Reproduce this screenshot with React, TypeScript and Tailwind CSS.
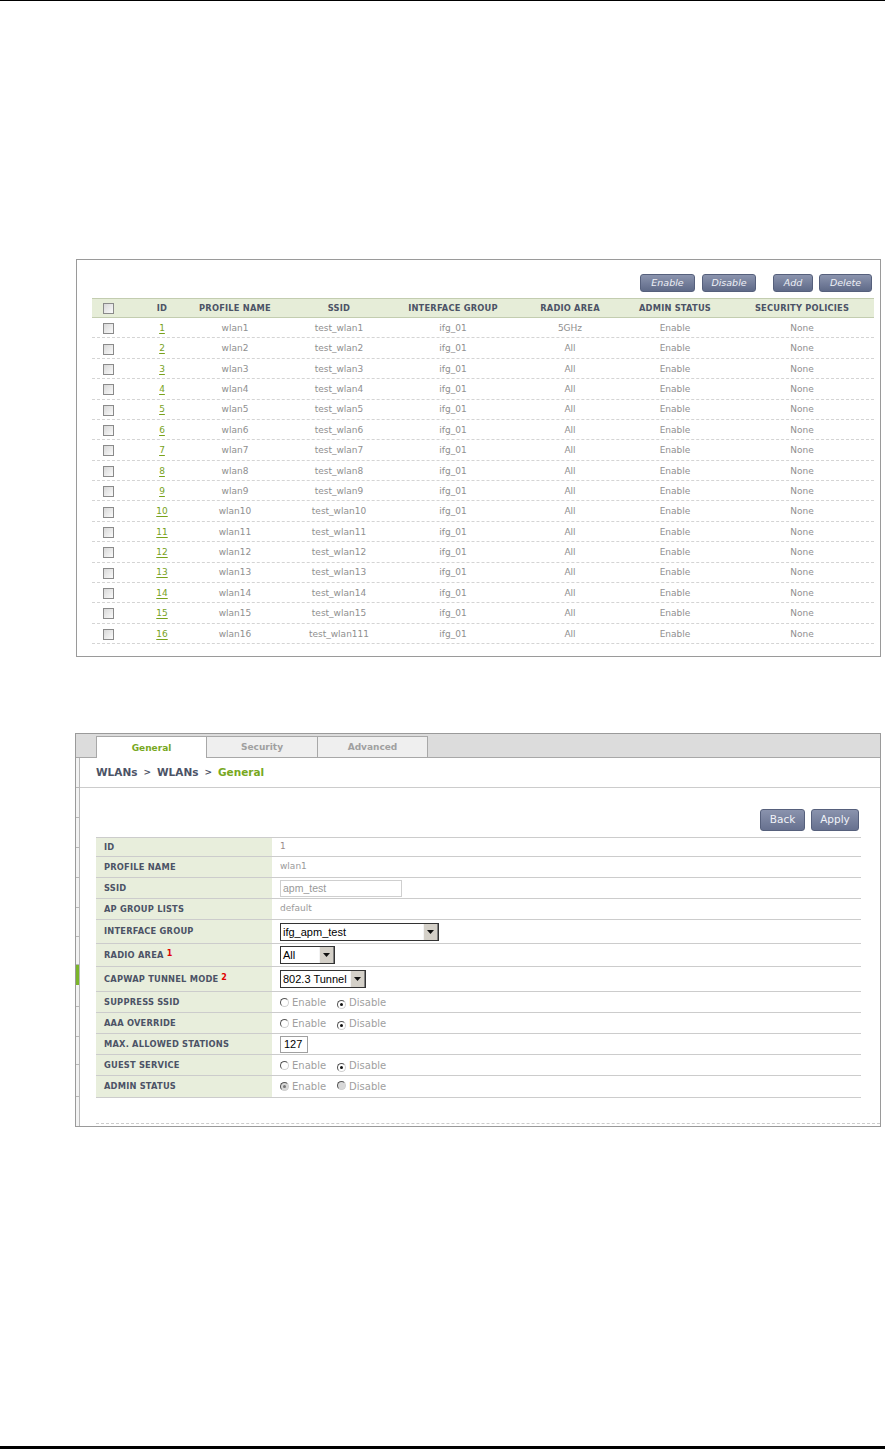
import React from "react";

const F = "font-['DejaVu_Sans',Verdana,sans-serif]";

const Checkbox = () => (
  <span className="inline-block w-[11px] h-[11px] border border-[#8a8a8a] bg-linear-to-br from-[#d8d8d8] to-[#fafafa]" />
);

const SlateBtn = ({ label, w }: { label: string; w: string }) => (
  <div
    className={`${w} h-[18px] rounded-[3px] border border-[#56607c] bg-linear-to-b from-[#8b94ae] to-[#5f6a88] flex items-center justify-center text-[9.5px] italic text-[#eef0f6] ${F}`}
  >
    {label}
  </div>
);

const cols = "grid grid-cols-[43px_63px_89px_109px_115px_111px_116px_135px]";
const pads = [
  "pr-[11px]",
  "pr-[9px]",
  "pr-[15px]",
  "pr-[5px]",
  "pr-[1px]",
  "pl-[7px]",
  "pr-[10px]",
  "pr-[7px]",
];
const headers = [
  "",
  "ID",
  "PROFILE NAME",
  "SSID",
  "INTERFACE GROUP",
  "RADIO AREA",
  "ADMIN STATUS",
  "SECURITY POLICIES",
];

const rows = Array.from({ length: 16 }, (_, i) => {
  const n = i + 1;
  return {
    id: String(n),
    profile: `wlan${n}`,
    ssid: n === 16 ? "test_wlan111" : `test_wlan${n}`,
    ifg: "ifg_01",
    radio: n === 1 ? "5GHz" : "All",
    admin: "Enable",
    sec: "None",
  };
});

const Radio = ({ checked, disabled }: { checked?: boolean; disabled?: boolean }) => (
  <span
    className={`inline-flex items-center justify-center w-[9px] h-[9px] rounded-full border border-t-[#555] border-l-[#555] border-r-[#d0d0d0] border-b-[#d0d0d0] ${
      disabled ? "bg-[#d8d8d8]" : "bg-white"
    }`}
  >
    {checked && (
      <span className={`w-[3px] h-[3px] rounded-full ${disabled ? "bg-[#777]" : "bg-[#111]"}`} />
    )}
  </span>
);

const RadioPair = ({ enable, disabled }: { enable?: boolean; disabled?: boolean }) => (
  <div className={`flex items-center text-[10px] text-[#a0a0a0] ${F}`}>
    <Radio checked={enable} disabled={disabled} />
    <span className="ml-[3px]">Enable</span>
    <span className="ml-[11px]">
      <Radio checked={!enable} disabled={disabled} />
    </span>
    <span className="ml-[3px]">Disable</span>
  </div>
);

const Arrow = () => (
  <svg width="7" height="4" viewBox="0 0 7 4">
    <path d="M0 0H7L3.5 4Z" fill="#111" />
  </svg>
);

const Select = ({ value, w }: { value: string; w: string }) => (
  <div className={`${w} h-[18px] flex border border-[#333] bg-white`}>
    <span className="flex-1 pl-[2px] text-[11px] leading-[16px] text-black font-['Liberation_Sans',Arial,sans-serif] whitespace-nowrap overflow-hidden">
      {value}
    </span>
    <span className="w-[15px] bg-[#d4d0c8] border-l border-[#f4f4f4] border-r border-r-[#808080] flex items-center justify-center">
      <Arrow />
    </span>
  </div>
);

const Sup = ({ n }: { n: string }) => (
  <sup className="text-[#e00000] text-[8px] ml-[3px] relative -top-[1px] font-bold">{n}</sup>
);

type FormRow = { label: React.ReactNode; h: string; value: React.ReactNode };

const formRows: FormRow[] = [
  { label: "ID", h: "h-[19px]", value: <span className="text-[#9a8a8a]">1</span> },
  { label: "PROFILE NAME", h: "h-[21px]", value: "wlan1" },
  {
    label: "SSID",
    h: "h-[21px]",
    value: (
      <div className="w-[122px] h-[17px] border border-[#cfcfcf] pl-[2px] text-[10.5px] leading-[15px] text-[#999] font-['Liberation_Sans',Arial,sans-serif]">
        apm_test
      </div>
    ),
  },
  { label: "AP GROUP LISTS", h: "h-[21px]", value: "default" },
  {
    label: "INTERFACE GROUP",
    h: "h-[24px]",
    value: <Select value="ifg_apm_test" w="w-[159px]" />,
  },
  {
    label: (
      <>
        RADIO AREA
        <Sup n="1" />
      </>
    ),
    h: "h-[23px]",
    value: <Select value="All" w="w-[55px]" />,
  },
  {
    label: (
      <>
        CAPWAP TUNNEL MODE
        <Sup n="2" />
      </>
    ),
    h: "h-[25px]",
    value: <Select value="802.3 Tunnel" w="w-[86px]" />,
  },
  { label: "SUPPRESS SSID", h: "h-[21px]", value: <RadioPair /> },
  { label: "AAA OVERRIDE", h: "h-[21px]", value: <RadioPair /> },
  {
    label: "MAX. ALLOWED STATIONS",
    h: "h-[21px]",
    value: (
      <div className="w-[28px] h-[17px] border border-[#a0a0a0] pl-[3px] text-[11px] leading-[15px] text-black font-['Liberation_Sans',Arial,sans-serif]">
        127
      </div>
    ),
  },
  { label: "GUEST SERVICE", h: "h-[21px]", value: <RadioPair /> },
  { label: "ADMIN STATUS", h: "h-[22px]", value: <RadioPair enable disabled /> },
];

const stripCells = [
  { h: "h-[30px]", g: false },
  { h: "h-[30px]", g: false },
  { h: "h-[30px]", g: false },
  { h: "h-[30px]", g: false },
  { h: "h-[30px]", g: false },
  { h: "h-[29px]", g: false },
  { h: "h-[28px]", g: false },
  { h: "h-[20px]", g: true },
  { h: "h-[22px]", g: false },
  { h: "h-[30px]", g: false },
  { h: "h-[28px]", g: false },
  { h: "h-[32px]", g: false },
];

export default function App() {
  return (
    <div className={`w-full h-[1449px] bg-white flex flex-col ${F}`}>
      <div className="h-[1px] bg-black shrink-0" />

      {/* Panel 1: WLAN list */}
      <div className="mt-[258px] ml-[76px] w-[805px] h-[398px] border border-[#9a9a9a] pl-[15px] pr-[6px] pt-[14px] shrink-0">
        <div className="flex justify-end mr-[2px]">
          <SlateBtn label="Enable" w="w-[55px]" />
          <div className="ml-[7px]">
            <SlateBtn label="Disable" w="w-[54px]" />
          </div>
          <div className="ml-[17px]">
            <SlateBtn label="Add" w="w-[40px]" />
          </div>
          <div className="ml-[6px]">
            <SlateBtn label="Delete" w="w-[53px]" />
          </div>
        </div>

        <div className="mt-[6px]">
          <div
            className={`${cols} h-[20px] bg-[#e6edd8] border-t border-b border-[#c3cdb0] items-center text-[8.3px] font-bold text-[#4c5366] tracking-[0.2px]`}
          >
            {headers.map((h, i) => (
              <div key={i} className={`text-center flex justify-center whitespace-nowrap ${pads[i]}`}>
                {i === 0 ? <Checkbox /> : h}
              </div>
            ))}
          </div>
          {rows.map((r) => {
            const cells = [r.id, r.profile, r.ssid, r.ifg, r.radio, r.admin, r.sec];
            return (
              <div
                key={r.id}
                className={`${cols} h-[20.375px] pt-[2px] border-b border-dashed border-[#d4d4d4] items-center text-[9px] text-[#8f8f8f]`}
              >
                <div className={`flex justify-center ${pads[0]}`}>
                  <Checkbox />
                </div>
                {cells.map((c, i) => (
                  <div key={i} className={`text-center whitespace-nowrap ${pads[i + 1]}`}>
                    {i === 0 ? (
                      <span className="text-[#78a21c] underline decoration-[#78a21c] underline-offset-[2px]">
                        {c}
                      </span>
                    ) : (
                      c
                    )}
                  </div>
                ))}
              </div>
            );
          })}
        </div>
      </div>

      {/* Panel 2: WLAN General form */}
      <div className="mt-[76px] ml-[75px] w-[806px] h-[394px] border border-[#9a9a9a] flex flex-col shrink-0">
        <div className="h-[24px] bg-[#dcdcdc] border-b border-[#a8a8a8] flex items-end pl-[20px] shrink-0">
          <div className="w-[111px] h-[22px] -mb-[1px] pt-[2px] bg-white border border-b-0 border-[#a8a8a8] flex items-center justify-center text-[9px] font-bold text-[#78a81e]">
            General
          </div>
          <div className="w-[111px] h-[22px] -mb-[1px] pt-[2px] bg-[#efefef] border-t border-r border-b border-[#a8a8a8] flex items-center justify-center text-[9px] font-bold text-[#a0a0a0]">
            Security
          </div>
          <div className="w-[110px] h-[22px] -mb-[1px] pt-[2px] bg-[#efefef] border-t border-r border-b border-[#a8a8a8] flex items-center justify-center text-[9px] font-bold text-[#a0a0a0]">
            Advanced
          </div>
        </div>

        <div className="flex flex-1">
          <div className="w-[3px] flex flex-col bg-[#f3f3f3]">
            {stripCells.map((c, i) => (
              <div
                key={i}
                className={`${c.h} shrink-0 border-b ${c.g ? "bg-[#7bb52a] border-[#7bb52a]" : "border-[#b8b8b8]"}`}
              />
            ))}
          </div>
          <div className="flex-1 border-l border-[#b8b8b8] flex flex-col">
            <div className="h-[30px] border-b border-[#cccccc] pl-[16px] flex items-center text-[10.5px] font-bold text-[#4c5366] shrink-0">
              WLANs
              <span className="mx-[6px] text-[9px]">&gt;</span>
              WLANs
              <span className="mx-[6px] text-[9px]">&gt;</span>
              <span className="text-[#78a81e]">General</span>
            </div>

            <div className="pl-[16px] pr-[19px]">
              <div className="flex justify-end mt-[21px] mr-[2px]">
                <div className="w-[45px] h-[22px] rounded-[3px] border border-[#56607c] bg-linear-to-b from-[#8a93ad] to-[#67718f] flex items-center justify-center text-[10.5px] text-[#f0f2f8]">
                  Back
                </div>
                <div className="ml-[6px] w-[48px] h-[22px] rounded-[3px] border border-[#56607c] bg-linear-to-b from-[#8a93ad] to-[#67718f] flex items-center justify-center text-[10.5px] text-[#f0f2f8]">
                  Apply
                </div>
              </div>

              <div className="mt-[6px] border-t border-[#cccccc]">
                {formRows.map((r, i) => (
                  <div key={i} className={`${r.h} flex border-b border-[#cccccc]`}>
                    <div className="w-[176px] shrink-0 bg-[#e8eedc] pl-[8px] flex items-center text-[8.3px] font-bold text-[#4c5366] tracking-[0.2px] whitespace-nowrap">
                      {r.label}
                    </div>
                    <div className="flex-1 pl-[8px] flex items-center text-[9px] text-[#9a9a9a]">
                      {r.value}
                    </div>
                  </div>
                ))}
              </div>
            </div>

            <div className="mt-auto mb-[2px] ml-[16px] border-b border-dashed border-[#cccccc]" />
          </div>
        </div>
      </div>

      <div className="mt-auto mb-[0px] h-[3px] bg-black shrink-0" />
    </div>
  );
}
